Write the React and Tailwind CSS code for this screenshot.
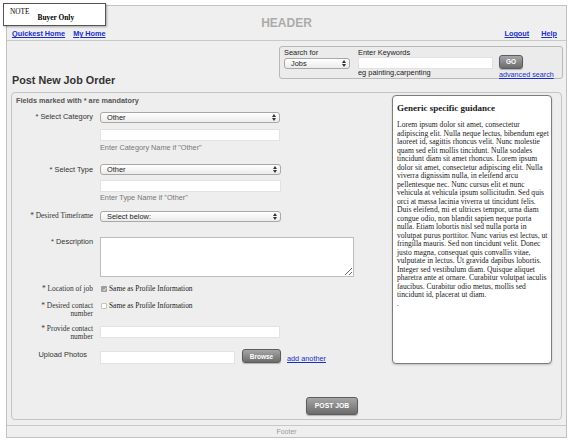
import React from 'react';

const sans = "font-['Liberation_Sans',Arial,sans-serif]";
const serif = "font-['Liberation_Serif','Times_New_Roman',serif]";

function Arrows() {
  return (
    <svg width="4" height="7" viewBox="0 0 4 7" className="shrink-0">
      <path d="M0 3 L2 0 L4 3 Z M0 4 L2 7 L4 4 Z" fill="#333" />
    </svg>
  );
}

function FakeSelect({ value, width }) {
  return (
    <div
      style={{ width }}
      className="flex h-[11px] items-center justify-between rounded-[3px] border border-[#a8a8a8] bg-linear-to-b from-white to-[#ebebeb] pl-[6px] pr-[3px] text-[7.4px] leading-none text-[#222]"
    >
      <span>{value}</span>
      <Arrows />
    </div>
  );
}

function TextBox({ className = '' }) {
  return <div className={`border border-[#e2e2e2] bg-white ${className}`} />;
}

function GrayButton({ children, className = '' }) {
  return (
    <div
      className={`flex items-center justify-center rounded-[3px] border border-[#5c5c5c] bg-linear-to-b from-[#a6a6a6] to-[#6c6c6c] font-bold text-white shadow-[0_1px_1px_rgba(0,0,0,0.25)] ${className}`}
    >
      {children}
    </div>
  );
}

function Label({ children, font = sans, className = '' }) {
  return (
    <div className={`w-[77px] shrink-0 text-right text-[#333] ${font} ${className}`}>{children}</div>
  );
}

// line breaks as they fall in the reference box
const guidanceLines = [
  'Lorem ipsum dolor sit amet, consectetur',
  'adipiscing elit. Nulla neque lectus, bibendum eget',
  'laoreet id, sagittis rhoncus velit. Nunc molestie',
  'quam sed elit mollis tincidunt. Nulla sodales',
  'tincidunt diam sit amet rhoncus. Lorem ipsum',
  'dolor sit amet, consectetur adipiscing elit. Nulla',
  'viverra dignissim nulla, in eleifend arcu',
  'pellentesque nec. Nunc cursus elit et nunc',
  'vehicula at vehicula ipsum sollicitudin. Sed quis',
  'orci at massa lacinia viverra ut tincidunt felis.',
  'Duis eleifend, mi et ultrices tempor, urna diam',
  'congue odio, non blandit sapien neque porta',
  'nulla. Etiam lobortis nisl sed nulla porta in',
  'volutpat purus porttitor. Nunc varius est lectus, ut',
  'fringilla mauris. Sed non tincidunt velit. Donec',
  'justo magna, consequat quis convallis vitae,',
  'vulputate in lectus. Ut gravida dapibus lobortis.',
  'Integer sed vestibulum diam. Quisque aliquet',
  'pharetra ante at ornare. Curabitur volutpat iaculis',
  'faucibus. Curabitur odio metus, mollis sed',
  'tincidunt id, placerat ut diam.',
  '.',
];

export default function App() {
  return (
    <div className={`relative h-[441px] w-[576px] overflow-hidden bg-white pt-[5px] pl-[6px] ${sans}`}>
      {/* note badge over the header */}
      <div className={`absolute left-[3px] top-[3px] z-10 flex h-[23px] w-[103px] items-start border border-[#555] bg-white pl-[6px] pt-[4px] shadow-[1px_1px_2px_rgba(0,0,0,0.3)] ${serif}`}>
        <span className="text-[7.3px] leading-[8px] text-black">NOTE</span>
        <span className="ml-[8px] mt-[6px] text-[7.4px] font-bold leading-[8px] text-black">Buyer Only</span>
      </div>

      <div className="h-[433px] w-[561px] border border-[#c2c2c2] bg-[#efefef]">
        {/* header */}
        <header className="flex h-[35px] flex-col border-b border-[#c8c8c8]">
          <div className="pt-[11px] text-center text-[12px] font-bold leading-[12px] text-[#ababab]">HEADER</div>
          <div className="flex items-center justify-between pl-[5px] pr-[9px] text-[7.3px] font-bold leading-[9px] text-[#1a2fc9]">
            <div className="flex gap-[8px]">
              <span className="underline">Quickest Home</span>
              <span className="underline">My Home</span>
            </div>
            <div className="flex gap-[12px]">
              <span className="underline">Logout</span>
              <span className="underline">Help</span>
            </div>
          </div>
        </header>

        {/* title + search */}
        <div className="mt-[5px] flex items-start justify-between pl-[5px] pr-[3px]">
          <h1 className="pt-[28px] text-[10.8px] font-bold leading-[12px] text-[#333]">Post New Job Order</h1>
          <div className="flex h-[33px] w-[284px] rounded-[3px] border border-[#b8b8b8] bg-[#ebebeb] pl-[4px] pt-[2px] text-[7.4px] text-[#222]">
            <div className="w-[66px]">
              <div className="leading-[8px]">Search for</div>
              <div className="mt-[1px]">
                <FakeSelect value="Jobs" width={66} />
              </div>
            </div>
            <div className="ml-[8px] w-[135px]">
              <div className="leading-[8px]">Enter Keywords</div>
              <TextBox className="h-[12px] w-[135px]" />
              <div className="leading-[8px]">eg painting,carpenting</div>
            </div>
            <div className="ml-[6px]">
              <GrayButton className="mt-[6px] h-[14px] w-[24px] text-[6.5px] text-[#e4e4e4]">GO</GrayButton>
              <div className="mt-[2px] text-[7.2px] leading-[8px] text-[#1a2fc9] underline">advanced search</div>
            </div>
          </div>
        </div>

        {/* form panel */}
        <div className="mx-[4px] mt-[6px] flex rounded-[4px] border border-[#c4c4c4] bg-[#eeeeee]">
          <div className="flex-1 pl-[4px] pb-[4px] pt-[3px] text-[7.4px]">
            <div className="text-[7.3px] font-bold leading-[9px] text-[#555]">Fields marked with * are mandatory</div>

            <div className="mt-[7px] flex items-start leading-[9px]">
              <Label>* Select Category</Label>
              <div className="ml-[7px]">
                <FakeSelect value="Other" width={180} />
              </div>
            </div>
            <TextBox className="ml-[84px] mt-[6px] h-[12px] w-[180px]" />
            <div className="ml-[84px] mt-[3px] text-[7.3px] leading-[8px] text-[#777]">Enter Category Name if "Other"</div>

            <div className="mt-[12px] flex items-start leading-[9px]">
              <Label className="pt-[1px]">* Select Type</Label>
              <div className="ml-[7px]">
                <FakeSelect value="Other" width={181} />
              </div>
            </div>
            <TextBox className="ml-[84px] mt-[5px] h-[12px] w-[181px]" />
            <div className="ml-[84px] mt-[2px] text-[7.3px] leading-[8px] text-[#777]">Enter Type Name if "Other"</div>

            <div className="mt-[9px] flex items-start leading-[10px]">
              <Label font={serif}>* Desired Timeframe</Label>
              <div className="ml-[7px]">
                <FakeSelect value="Select below:" width={181} />
              </div>
            </div>

            <div className="mt-[15px] flex items-start leading-[9px]">
              <Label>* Description</Label>
              <textarea className="ml-[7px] h-[40px] w-[254px] resize border border-[#bdbdbd] bg-white outline-none" />
            </div>

            <div className={`mt-[8px] flex items-center leading-[8px] ${serif}`}>
              <Label font={serif}>* Location of job</Label>
              <div className="ml-[8px] flex items-center">
                <span className="flex h-[6px] w-[6px] items-center justify-center rounded-[1px] bg-[#9c9c9c]">
                  <svg width="5" height="5" viewBox="0 0 5 5">
                    <path d="M1 2.6 L2.1 3.7 L4 1.2" stroke="#fff" strokeWidth="0.9" fill="none" />
                  </svg>
                </span>
                <span className="ml-[2px] text-[7.4px] text-[#222]">Same as Profile Information</span>
              </div>
            </div>

            <div className={`mt-[9px] flex items-start leading-[8px] ${serif}`}>
              <Label font={serif}>
                * Desired contact
                <br />
                number
              </Label>
              <div className="ml-[8px] flex items-center">
                <span className="h-[6px] w-[6px] rounded-[1px] border border-[#c4c4c4] bg-white" />
                <span className="ml-[2px] text-[7.4px] text-[#222]">Same as Profile Information</span>
              </div>
            </div>

            <div className="mt-[7px] flex items-start leading-[8px]">
              <Label font={serif}>
                * Provide contact
                <br />
                number
              </Label>
              <TextBox className="ml-[7px] mt-[1px] h-[12px] w-[180px]" />
            </div>

            <div className="mt-[8px] flex items-start leading-[9px]">
              <Label className="pr-[6px] pt-[1px]">Upload Photos</Label>
              <TextBox className="ml-[7px] mt-[2px] h-[13px] w-[135px]" />
              <GrayButton className="ml-[7px] h-[14px] w-[39px] text-[6.5px]">Browse</GrayButton>
              <span className="ml-[6px] mt-[6px] text-[7.3px] leading-[8px] text-[#1a2fc9] underline">add another</span>
            </div>

            <GrayButton className="ml-[290px] mt-[33px] h-[18px] w-[52px] text-[6.8px]">POST JOB</GrayButton>
          </div>

          <aside className={`mb-auto mr-[9px] mt-[2px] h-[269px] w-[160px] rounded-[4px] border border-[#7d7d7d] bg-white pl-[4px] pr-[2px] pt-[7px] text-[#1a1a1a] shadow-[0_1px_2px_rgba(0,0,0,0.2)] ${serif}`}>
            <h2 className="text-[9px] font-bold leading-[10px]">Generic specific guidance</h2>
            <div className="mt-[8px] text-[7.6px] leading-[8.5px]">
              {guidanceLines.map((line, i) => (
                <div key={i} className="whitespace-nowrap">{line}</div>
              ))}
            </div>
          </aside>
        </div>

        {/* footer */}
        <footer className="mt-[5px] h-[12px] border-t border-[#c8c8c8] text-center text-[7px] leading-[11px] text-[#9a9a9a]">
          Footer
        </footer>
      </div>
    </div>
  );
}
